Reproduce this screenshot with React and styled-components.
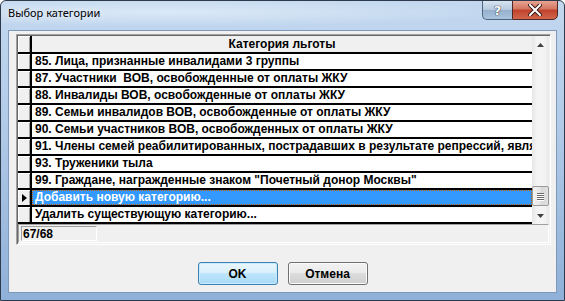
import React from "react";
import styled, { createGlobalStyle } from "styled-components";

const GlobalStyle = createGlobalStyle`
  html, body {
    margin: 0;
    padding: 0;
    background: #ffffff;
  }
`;

const rows = [
  "85. Лица, признанные инвалидами 3 группы",
  "87. Участники  ВОВ, освобожденные от оплаты ЖКУ",
  "88. Инвалиды ВОВ, освобожденные от оплаты ЖКУ",
  "89. Семьи инвалидов ВОВ, освобожденные от оплаты ЖКУ",
  "90. Семьи участников ВОВ, освобожденных от оплаты ЖКУ",
  "91. Члены семей реабилитированных, пострадавших в результате репрессий, являющиеся",
  "93. Труженики тыла",
  "99. Граждане, награжденные знаком \"Почетный донор Москвы\"",
  "Добавить новую категорию...",
  "Удалить существующую категорию...",
];

const App = () => {
  return (
    <>
      <GlobalStyle />
      <Window>
        <TitleBar>
          <Title>Выбор категории</Title>
          <CaptionButtons>
            <HelpButton>?</HelpButton>
            <CloseButton>
              <svg width="14" height="12" viewBox="0 0 14 12">
                <path
                  d="M2 1 L12 11 M12 1 L2 11"
                  stroke="#3a1a14"
                  strokeWidth="4"
                  strokeLinecap="square"
                />
                <path
                  d="M2 1 L12 11 M12 1 L2 11"
                  stroke="#ffffff"
                  strokeWidth="2"
                  strokeLinecap="square"
                />
              </svg>
            </CloseButton>
          </CaptionButtons>
        </TitleBar>
        <Client>
          <GridPanel>
            <GridBody>
              <Table>
                <HeaderRow>
                  <Indicator />
                  <HeaderCell>Категория льготы</HeaderCell>
                </HeaderRow>
                {rows.map((text, i) => (
                  <Row key={i}>
                    <Indicator>{i === 8 && <Arrow />}</Indicator>
                    <Cell $selected={i === 8}>{text}</Cell>
                  </Row>
                ))}
              </Table>
              <ScrollBar>
                <ScrollArrow>
                  <svg width="7" height="4" viewBox="0 0 7 4">
                    <path d="M0 4 L3.5 0 L7 4 Z" fill="#404040" />
                  </svg>
                </ScrollArrow>
                <Track>
                  <Thumb>
                    <Grip />
                    <Grip />
                    <Grip />
                    <Grip />
                  </Thumb>
                </Track>
                <ScrollArrow>
                  <svg width="7" height="4" viewBox="0 0 7 4">
                    <path d="M0 0 L3.5 4 L7 0 Z" fill="#404040" />
                  </svg>
                </ScrollArrow>
              </ScrollBar>
            </GridBody>
            <StatusBar>
              <StatusField>67/68</StatusField>
            </StatusBar>
          </GridPanel>
          <Buttons>
            <DialogButton $default>OK</DialogButton>
            <DialogButton>Отмена</DialogButton>
          </Buttons>
        </Client>
      </Window>
    </>
  );
};

const Window = styled.div`
  width: 565px;
  height: 301px;
  box-sizing: border-box;
  display: flex;
  flex-direction: column;
  border: 1px solid #2c3a4c;
  border-radius: 6px 6px 0 0;
  background: linear-gradient(to bottom, #c3d8ef 0%, #b2cbe8 40%, #8fb0d8 100%);
  overflow: hidden;
`;

const TitleBar = styled.div`
  height: 28px;
  display: flex;
  align-items: flex-start;
  justify-content: space-between;
  padding-left: 7px;
  background: radial-gradient(ellipse at 30% 40%, rgba(230, 240, 250, 0.7), rgba(230, 240, 250, 0) 60%);
`;

const Title = styled.div`
  margin-top: 4px;
  font-family: "Noto Sans", "Open Sans", sans-serif;
  font-size: 11px;
  color: #000;
  text-shadow: 0 0 8px rgba(255, 255, 255, 0.9);
`;

const CaptionButtons = styled.div`
  display: flex;
  margin-top: -1px;
  margin-right: 6px;
`;

const HelpButton = styled.div`
  width: 30px;
  height: 20px;
  box-sizing: border-box;
  border: 1px solid #4d6680;
  border-right: none;
  border-radius: 0 0 0 5px;
  background: linear-gradient(to bottom, #d8e4f0 0%, #b5c9de 50%, #96b0cc 51%, #aac3dd 100%);
  display: flex;
  align-items: center;
  justify-content: center;
  font-family: "DejaVu Sans", sans-serif;
  font-weight: bold;
  font-size: 13px;
  color: #ffffff;
  text-shadow: 0 0 1px #202830, 0 0 1px #202830;
`;

const CloseButton = styled.div`
  width: 46px;
  height: 20px;
  box-sizing: border-box;
  border: 1px solid #4d2a26;
  border-radius: 0 0 5px 0;
  background: linear-gradient(to bottom, #e8a493 0%, #d27661 45%, #c0412b 50%, #d2674d 100%);
  display: flex;
  align-items: center;
  justify-content: center;
`;

const Client = styled.div`
  flex: 1;
  margin: 1px 7px 7px 7px;
  border: 1px solid #7d98b8;
  background: #f0f0f0;
  display: flex;
  flex-direction: column;
  padding: 3px 7px 0 7px;
`;

const GridPanel = styled.div`
  width: 531px;
  border: 1px solid #a0a0a0;
  border-right-color: #ffffff;
  border-bottom-color: #ffffff;
  box-shadow: inset 1px 1px 0 #696969;
  background: #f0f0f0;
  display: flex;
  flex-direction: column;
  padding: 1px 1px 1px 1px;
`;

const GridBody = styled.div`
  display: flex;
  background: #ffffff;
`;

const Table = styled.div`
  flex: 1;
  display: flex;
  flex-direction: column;
  overflow: hidden;
`;

const Row = styled.div`
  display: flex;
  height: 17px;
  border-bottom: 2px solid #000;
  box-sizing: border-box;
`;

const HeaderRow = styled(Row)`
  height: 18px;
`;

const Indicator = styled.div`
  width: 12px;
  flex: none;
  background: #f0f0f0;
  border-right: 2px solid #000;
  box-shadow: inset 1px 1px 0 #ffffff, inset -1px 0 0 #a0a0a0;
  display: flex;
  align-items: center;
  justify-content: center;
`;

const Arrow = styled.div`
  width: 0;
  height: 0;
  border-top: 4px solid transparent;
  border-bottom: 4px solid transparent;
  border-left: 5px solid #000;
`;

const HeaderCell = styled.div`
  flex: 1;
  background: #f0f0f0;
  text-align: center;
  font-family: "Liberation Sans", Arial, sans-serif;
  font-weight: bold;
  font-size: 12px;
  line-height: 16px;
  color: #000;
`;

const Cell = styled.div`
  flex: 1;
  min-width: 0;
  padding-left: 3px;
  white-space: pre;
  overflow: hidden;
  font-family: "Liberation Sans", Arial, sans-serif;
  font-size: 12px;
  font-weight: bold;
  line-height: 15px;
  color: ${(p) => (p.$selected ? "#ffffff" : "#000000")};
  background: ${(p) => (p.$selected ? "#3399ff" : "#ffffff")};
  outline: ${(p) => (p.$selected ? "1px dotted #c06000" : "none")};
  outline-offset: -1px;
`;

const ScrollBar = styled.div`
  width: 17px;
  flex: none;
  display: flex;
  flex-direction: column;
  background: linear-gradient(to right, #e6e6e6, #f4f4f4 30%, #f4f4f4 70%, #e8e8e8);
`;

const ScrollArrow = styled.div`
  height: 17px;
  display: flex;
  align-items: center;
  justify-content: center;
`;

const Track = styled.div`
  flex: 1;
  display: flex;
  flex-direction: column;
  justify-content: flex-end;
  padding-bottom: 1px;
`;

const Thumb = styled.div`
  height: 20px;
  box-sizing: border-box;
  border: 1px solid #9a9a9a;
  border-radius: 2px;
  background: linear-gradient(to right, #f4f4f4, #e4e4e4 50%, #d8d8d8 51%, #e0e0e0);
  display: flex;
  flex-direction: column;
  align-items: center;
  justify-content: center;
  gap: 1px;
`;

const Grip = styled.div`
  width: 7px;
  height: 1px;
  background: #6a6a6a;
  box-shadow: 0 1px 0 #ffffff;
`;

const StatusBar = styled.div`
  height: 19px;
  box-sizing: border-box;
  border: 1px solid #a0a0a0;
  border-right-color: #ffffff;
  border-bottom-color: #ffffff;
  background: #f0f0f0;
  display: flex;
  align-items: stretch;
  padding: 1px 2px;
`;

const StatusField = styled.div`
  width: 76px;
  box-sizing: border-box;
  border: 1px solid #a0a0a0;
  border-right-color: #ffffff;
  border-bottom-color: #ffffff;
  padding-left: 1px;
  font-family: "Liberation Sans", Arial, sans-serif;
  font-size: 12px;
  font-weight: bold;
  line-height: 15px;
  color: #000;
`;

const Buttons = styled.div`
  display: flex;
  justify-content: center;
  gap: 10px;
  margin-top: 17px;
`;

const DialogButton = styled.div`
  width: 80px;
  height: 23px;
  box-sizing: border-box;
  border: 1px solid ${(p) => (p.$default ? "#3c7fb1" : "#707070")};
  border-radius: 3px;
  background: ${(p) =>
    p.$default
      ? "linear-gradient(to bottom, #eaf6fd 0%, #d9f0fc 45%, #bee6fd 50%, #a7d9f5 100%)"
      : "linear-gradient(to bottom, #f2f2f2 0%, #ebebeb 45%, #dddddd 50%, #cfcfcf 100%)"};
  box-shadow: inset 0 0 0 1px ${(p) => (p.$default ? "#c8ecfd" : "#fbfbfb")};
  display: flex;
  align-items: center;
  justify-content: center;
  font-family: "Liberation Sans", Arial, sans-serif;
  font-size: 12px;
  font-weight: bold;
  color: #000;
`;

export default App;
